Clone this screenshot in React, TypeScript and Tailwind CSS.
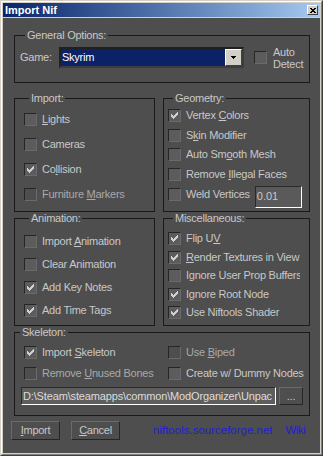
import React from "react";

const Check = () => (
  <svg width="7" height="7" viewBox="0 0 7 7" shapeRendering="crispEdges" fill="#d0d0d0">
    <path d="M6 0h1v1h-1zM5 1h2v1h-2zM0 2h1v1h-1zM4 2h3v1h-3zM0 3h2v1h-2zM3 3h3v1h-3zM0 4h5v1h-5zM1 5h3v1h-3zM2 6h1v1h-1z" />
  </svg>
);

function Box({ checked = false, disabled = false }: { checked?: boolean; disabled?: boolean }) {
  return (
    <span
      className={
        disabled
          ? "flex h-[13px] w-[13px] shrink-0 items-center justify-center border border-t-[#262626] border-l-[#262626] border-r-[#6a6a6a] border-b-[#6a6a6a] bg-[#4e4e4e]"
          : "flex h-[13px] w-[13px] shrink-0 items-center justify-center border border-t-[#262626] border-l-[#262626] border-r-[#6a6a6a] border-b-[#6a6a6a] bg-[#5c5c5c]"
      }
    >
      {checked && <Check />}
    </span>
  );
}

const U = ({ children }: { children: React.ReactNode }) => (
  <span className="underline underline-offset-[1px]">{children}</span>
);

function Item({
  children,
  checked = false,
  disabled = false,
  clip = false,
}: {
  children: React.ReactNode;
  checked?: boolean;
  disabled?: boolean;
  clip?: boolean;
}) {
  return (
    <div className="flex h-[13px] items-center gap-[5px]">
      <Box checked={checked} disabled={disabled} />
      <span
        className={
          clip
            ? "w-[114px] overflow-hidden whitespace-nowrap"
            : disabled
            ? "whitespace-nowrap text-[#a9a9a9]"
            : "whitespace-nowrap"
        }
      >
        {children}
      </span>
    </div>
  );
}

function Group({
  label,
  className,
  children,
}: {
  label: string;
  className: string;
  children: React.ReactNode;
}) {
  return (
    <fieldset className={"min-w-0 border border-[#1a1a1a] " + className}>
      <legend className="ml-[5px] px-[2px] leading-[13px]">{label}</legend>
      {children}
    </fieldset>
  );
}

const Raised =
  "flex items-center justify-center border border-t-[#6a6a6a] border-l-[#6a6a6a] border-r-[#262626] border-b-[#262626] bg-[#4e4e4e]";

export default function App() {
  return (
    <div className="h-[456px] w-[323px] overflow-hidden font-['Liberation_Sans',Arial,sans-serif] text-[11px] leading-[13px] tracking-[-0.25px] text-[#c8c8c8]">
      <div className="flex h-full flex-col border border-t-[#d4d0c8] border-l-[#d4d0c8] border-r-[#404040] border-b-[#404040]">
        <div className="flex h-full flex-col border border-t-white border-l-white border-r-[#808080] border-b-[#808080] bg-[#d4d0c8] p-px">
          {/* Title bar */}
          <div className="mb-px flex h-[14px] shrink-0 items-center justify-between bg-linear-to-r from-[#0a246a] to-[#a6caf0] pl-[2px] pr-[2px]">
            <span className="text-[11px] font-bold tracking-normal text-white">Import Nif</span>
            <span className="flex h-[10px] w-[11px] items-center justify-center border border-t-white border-l-white border-r-[#404040] border-b-[#404040] bg-[#d4d0c8]">
              <svg width="6" height="5" viewBox="0 0 6 5" shapeRendering="crispEdges">
                <path d="M0 0L6 5M6 0L0 5" stroke="#000" strokeWidth="1.3" />
              </svg>
            </span>
          </div>

          {/* Content */}
          <div className="flex flex-1 flex-col bg-[#4e4e4e] pl-[11px] pr-[10px]">
            <Group label="General Options:" className="mt-[11px] pb-[14px] pl-[5px] pt-[5px]">
              <div className="flex h-[21px] items-center">
                <span className="w-[39px]">Game:</span>
                <div className="flex h-[21px] w-[185px] border-2 border-t-[#202020] border-l-[#202020] border-r-[#3d3d3d] border-b-[#3d3d3d]">
                  <div className="flex flex-1 items-center bg-[#0b2266] pl-[1px] text-white">Skyrim</div>
                  <div className="flex w-[17px] items-center justify-center border border-t-white border-l-white border-r-[#404040] border-b-[#404040] bg-[#d4d0c8]">
                    <svg width="5" height="3" viewBox="0 0 5 3" shapeRendering="crispEdges">
                      <path d="M0 0h5l-2.5 3z" fill="#000" />
                    </svg>
                  </div>
                </div>
                <div className="ml-[10px]">
                  <Box />
                </div>
                <div className="ml-[6px] flex flex-col leading-[12px]">
                  <span>Auto</span>
                  <span>Detect</span>
                </div>
              </div>
            </Group>

            <div className="mt-[9px] flex gap-[8px]">
              <Group label="Import:" className="w-[141px] pb-[10px] pl-[9px] pt-[8px]">
                <div className="flex flex-col gap-[12px]">
                  <Item>
                    <U>L</U>ights
                  </Item>
                  <Item>Cameras</Item>
                  <Item checked>
                    Co<U>l</U>lision
                  </Item>
                  <Item disabled>
                    Furniture <U>M</U>arkers
                  </Item>
                </div>
              </Group>
              <Group label="Geometry:" className="w-[147px] pb-[3px] pl-[4px] pt-[4px]">
                <div className="flex flex-col gap-[6.5px]">
                  <Item checked>
                    Vertex <U>C</U>olors
                  </Item>
                  <Item>
                    S<U>k</U>in Modifier
                  </Item>
                  <Item>
                    Auto Sm<U>o</U>oth Mesh
                  </Item>
                  <Item>
                    Remove <U>I</U>llegal Faces
                  </Item>
                </div>
                <div className="mt-[5px] flex h-[22px] items-start">
                  <div className="mt-[2px]">
                    <Item>Weld Vertices</Item>
                  </div>
                  <div className="ml-[5px] flex h-[22px] w-[47px] items-center border border-t-[#2a2a2a] border-l-[#2a2a2a] border-r-white border-b-white bg-[#5a5a5a] pl-[1px] tracking-normal">
                    0.01
                  </div>
                </div>
              </Group>
            </div>

            <div className="flex gap-[8px]">
              <Group label="Animation:" className="w-[141px] pb-[8px] pl-[9px] pt-[10px]">
                <div className="flex flex-col gap-[10px]">
                  <Item>
                    Import <U>A</U>nimation
                  </Item>
                  <Item>Clear Animation</Item>
                  <Item checked>Add Key Notes</Item>
                  <Item checked>Add Time Tags</Item>
                </div>
              </Group>
              <Group label="Miscellaneous:" className="w-[147px] pb-[6px] pl-[4px] pt-[7px]">
                <div className="flex flex-col gap-[5.5px]">
                  <Item checked clip>
                    Flip U<U>V</U>
                  </Item>
                  <Item checked clip>
                    <U>R</U>ender Textures in View
                  </Item>
                  <Item clip>Ignore User Prop Buffers</Item>
                  <Item checked clip>
                    Ignore Root Node
                  </Item>
                  <Item checked clip>
                    Use Niftools Shader
                  </Item>
                </div>
              </Group>
            </div>

            <Group label="Skeleton:" className="pb-[10px] pt-[7px]">
              <div className="grid grid-cols-[144px_1fr] gap-y-[8px] pl-[9px]">
                <Item checked>
                  Import <U>S</U>keleton
                </Item>
                <Item disabled>
                  Use <U>B</U>iped
                </Item>
                <Item disabled>
                  Remove <U>U</U>nused Bones
                </Item>
                <Item>Create w/ Dummy Nodes</Item>
              </div>
              <div className="mt-[7px] flex gap-[3px] pl-[6px]">
                <div className="flex h-[18px] w-[255px] items-center overflow-hidden whitespace-nowrap border border-t-[#2a2a2a] border-l-[#2a2a2a] border-r-white border-b-white bg-[#5e5e5e] pl-[1px] tracking-[-0.15px] text-[#dcdcdc]">
                  D:\Steam\steamapps\common\ModOrganizer\Unpac
                </div>
                <div className={Raised + " h-[18px] w-[24px]"}>...</div>
              </div>
            </Group>

            <div className="-ml-[3px] mt-[5px] flex h-[19px] items-center">
              <div className={Raised + " h-[19px] w-[49px]"}>
                <span>
                  <U>I</U>mport
                </span>
              </div>
              <div className={Raised + " ml-[11px] h-[19px] w-[49px]"}>
                <span>
                  <U>C</U>ancel
                </span>
              </div>
              <span className="ml-[33px] text-[11.5px] tracking-normal text-[#2020d0]">niftools.sourceforge.net</span>
              <span className="ml-[13px] text-[11.5px] tracking-[-0.5px] text-[#2020d0]">Wiki</span>
            </div>
          </div>
        </div>
      </div>
    </div>
  );
}
